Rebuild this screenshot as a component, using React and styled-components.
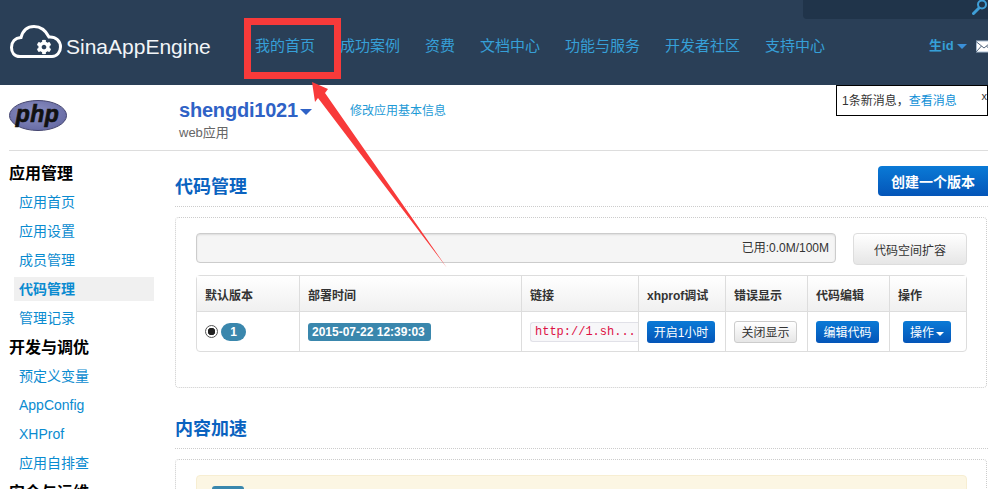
import React from "react"
import styled, { createGlobalStyle } from "styled-components"
import { FaCog } from "react-icons/fa"

const sans = `"Liberation Sans", "Noto Sans CJK SC", sans-serif`

const navItems = ["我的首页", "成功案例", "资费", "文档中心", "功能与服务", "开发者社区", "支持中心"]

const menu = [
  { title: "应用管理", links: ["应用首页", "应用设置", "成员管理", "代码管理", "管理记录"] },
  { title: "开发与调优", links: ["预定义变量", "AppConfig", "XHProf", "应用自排查"] },
  { title: "安全与运维", links: [] },
]

export default function App() {
  return (
    <Page>
      <GlobalStyle />
      <Header>
        <Logo>
          <svg width="52" height="33" viewBox="0 0 52 33">
            <path d="M10 31.500 C4 31.500 1.500 27 1.500 22.500 C1.500 17 5 13 11 12.500 C13 5 18 1.500 24 1.500 C31 1.500 36 6 39 12 C46 11.500 50.500 16 50.500 22 C50.500 27 47 31.500 42 31.500 Z" fill="none" stroke="#fff" strokeWidth="3" />
            <FaCog x="26.500" y="14.500" size="15" color="#fff" />
          </svg>
          <LogoText>SinaAppEngine</LogoText>
        </Logo>
        <Nav>
          {navItems.map((item) => <NavLink key={item}>{item}</NavLink>)}
        </Nav>
        <UserArea>
          <UserName>生id</UserName>
          <Caret $color="#3a8fd8" $size={5} />
          <svg width="13" height="13" viewBox="0 0 13 13">
            <rect x="0.500" y="1" width="16" height="11" fill="#fff" stroke="#a9bdd2" />
            <path d="M0 1.500 L8 8 L16 1.500 M0 12 L5.500 6 M16 12 L10.500 6" fill="none" stroke="#51657c" />
          </svg>
        </UserArea>
        <SearchBox>
          <svg width="16" height="15" viewBox="0 0 16 15">
            <circle cx="10" cy="4.500" r="4" fill="none" stroke="#3f9fd8" strokeWidth="2" />
            <path d="M7 8 L1.500 13.500" stroke="#3f9fd8" strokeWidth="3" strokeLinecap="round" />
          </svg>
        </SearchBox>
      </Header>

      <AppBar>
        <PhpSlot>
          <svg width="58" height="31" viewBox="0 0 58 31">
            <defs>
              <radialGradient id="phpFill" cx="45%" cy="40%" r="65%">
                <stop offset="0%" stopColor="#8e92c4" />
                <stop offset="100%" stopColor="#6468a2" />
              </radialGradient>
            </defs>
            <ellipse cx="29" cy="15.500" rx="28.500" ry="15" fill="url(#phpFill)" stroke="#43446e" />
            <text x="28.500" y="22" textAnchor="middle" fontFamily="Liberation Sans, sans-serif" fontSize="23" fontWeight="700" fontStyle="italic" letterSpacing="0.500" fill="#111" stroke="#111" strokeWidth="0.700">php</text>
          </svg>
        </PhpSlot>
        <AppInfo>
          <AppName>shengdi1021<Caret $color="#2f62c6" $size={6} /></AppName>
          <AppType>web应用</AppType>
        </AppInfo>
        <EditLink>修改应用基本信息</EditLink>
        <Notice>
          <span>1条新消息，<NoticeLink>查看消息</NoticeLink></span>
          <NoticeClose>x</NoticeClose>
        </Notice>
      </AppBar>

      <Body>
        <Sidebar>
          {menu.map((group) => (
            <Group key={group.title}>
              <GroupTitle>{group.title}</GroupTitle>
              {group.links.map((link) => (
                <SideLink key={link} $active={link === "代码管理"}>{link}</SideLink>
              ))}
            </Group>
          ))}
        </Sidebar>

        <Main>
          <SectionHead>
            <SectionTitle>代码管理</SectionTitle>
            <CreateButton>创建一个版本</CreateButton>
          </SectionHead>
          <Panel>
            <UsageRow>
              <Usage>已用:0.0M/100M</Usage>
              <ExpandButton>代码空间扩容</ExpandButton>
            </UsageRow>
            <VersionTable>
              <colgroup>
                <col width="102" />
                <col width="222" />
                <col width="117" />
                <col width="87" />
                <col width="82" />
                <col width="82" />
                <col width="77" />
              </colgroup>
              <thead>
                <tr>
                  <th>默认版本</th>
                  <th>部署时间</th>
                  <th>链接</th>
                  <th>xhprof调试</th>
                  <th>错误显示</th>
                  <th>代码编辑</th>
                  <th>操作</th>
                </tr>
              </thead>
              <tbody>
                <tr>
                  <td>
                    <VersionCell>
                      <Radio />
                      <VersionBadge>1</VersionBadge>
                    </VersionCell>
                  </td>
                  <td><DateLabel>2015-07-22 12:39:03</DateLabel></td>
                  <LinkCell><CodeLink>http://1.sh...</CodeLink></LinkCell>
                  <ActionCell><SmallButton>开启1小时</SmallButton></ActionCell>
                  <ActionCell><SmallButton $plain>关闭显示</SmallButton></ActionCell>
                  <ActionCell><SmallButton>编辑代码</SmallButton></ActionCell>
                  <ActionCell><SmallButton>操作<Caret $color="#fff" $size={4} /></SmallButton></ActionCell>
                </tr>
              </tbody>
            </VersionTable>
          </Panel>

          <SecondHead>
            <SectionTitle>内容加速</SectionTitle>
          </SecondHead>
          <Panel>
            <Alert><AlertBadge /></Alert>
          </Panel>
        </Main>
      </Body>

      <Annotation width="988" height="489" viewBox="0 0 988 489">
        <rect x="247.500" y="21.500" width="90" height="54" fill="none" stroke="#f83a3a" strokeWidth="7" />
        <polygon points="312,82 328,89 325,93 447,268 318,98 315,102" fill="#f83a3a" />
      </Annotation>
    </Page>
  )
}

const GlobalStyle = createGlobalStyle`
  html, body {
    margin: 0;
    background: #fff;
    overflow: hidden;
  }
  * {
    box-sizing: border-box;
  }
`

const Page = styled.div`
  position: relative;
  width: 988px;
  height: 489px;
  overflow: hidden;
  font-family: ${sans};
  font-size: 14px;
  color: #333;
`

const Header = styled.div`
  position: relative;
  height: 85px;
  background: #2a3f57;
  display: flex;
  align-items: flex-start;
  padding: 0 0 0 10px;
  overflow: hidden;
`

const Logo = styled.div`
  flex: none;
  display: flex;
  align-items: flex-start;
  gap: 4px;
  width: 245px;
  margin-top: 25px;
`

const LogoText = styled.span`
  margin-top: 10px;
  font-size: 21px;
  line-height: 24px;
  color: #f2f5f8;
`

const Nav = styled.div`
  flex: none;
  display: flex;
  gap: 25px;
  margin-top: 36px;
`

const NavLink = styled.a`
  font-size: 15px;
  line-height: 20px;
  white-space: nowrap;
  color: #36a0d8;
`

const UserArea = styled.div`
  flex: none;
  display: flex;
  align-items: center;
  margin-left: 104px;
  margin-top: 36px;
  gap: 1px;

  svg {
    margin-left: 8px;
    flex: none;
  }
`

const UserName = styled.span`
  font-size: 13px;
  font-weight: 700;
  line-height: 20px;
  white-space: nowrap;
  color: #36a0d8;
`

const Caret = styled.i`
  display: inline-block;
  width: 0;
  height: 0;
  margin-left: 2px;
  vertical-align: middle;
  border-left: ${(p) => p.$size}px solid transparent;
  border-right: ${(p) => p.$size}px solid transparent;
  border-top: ${(p) => p.$size}px solid ${(p) => p.$color};
`

const SearchBox = styled.div`
  position: absolute;
  top: 0;
  right: 0;
  width: 185px;
  height: 19px;
  background: #20344a;
  border-bottom-left-radius: 4px;
  display: flex;
  justify-content: flex-end;
`

const AppBar = styled.div`
  position: relative;
  height: 66px;
  margin-left: 9px;
  border-bottom: 1px solid #ddd;
  display: flex;
  align-items: flex-start;
`

const PhpSlot = styled.div`
  width: 170px;
  padding-top: 15px;
`

const AppInfo = styled.div`
  width: 171px;
  padding-top: 13px;
`

const AppName = styled.div`
  font-size: 20px;
  line-height: 24px;
  font-weight: 700;
  letter-spacing: -0.2px;
  color: #2f62c6;
`

const AppType = styled.div`
  margin-top: 1px;
  font-size: 13px;
  line-height: 19px;
  color: #666;
`

const EditLink = styled.a`
  margin-top: 17px;
  font-size: 12px;
  line-height: 18px;
  color: #1d9ad6;
`

const Notice = styled.div`
  position: absolute;
  top: 0;
  right: 0;
  width: 152px;
  height: 31px;
  padding: 0 5px;
  background: #fff;
  border: 1px solid #000;
  display: flex;
  justify-content: space-between;
  font-size: 12px;
  line-height: 31px;
  color: #333;
`

const NoticeLink = styled.a`
  color: #0e8fd6;
`

const NoticeClose = styled.span`
  margin-top: -5px;
  margin-right: -5px;
  font-size: 11px;
`

const Body = styled.div`
  display: flex;
`

const Sidebar = styled.div`
  width: 175px;
  flex: none;
  padding: 8px 21px 0 9px;
`

const Group = styled.div`
  margin-bottom: -2px;
`

const GroupTitle = styled.div`
  height: 29px;
  margin-bottom: 2px;
  font-size: 16px;
  font-weight: 700;
  line-height: 29px;
  color: #000;
`

const SideLink = styled.a`
  display: block;
  height: 24px;
  margin: 0 0 5px 5px;
  padding-left: 5px;
  font-size: 14px;
  line-height: 24px;
  color: #0a8bd0;
  background: ${(p) => (p.$active ? "#f0f0f0" : "transparent")};
  font-weight: ${(p) => (p.$active ? 700 : 400)};
`

const Main = styled.div`
  flex: 1;
  min-width: 0;
`

const SectionHead = styled.div`
  height: 56px;
  padding-top: 15px;
  border-bottom: 1px dotted #ccc;
  display: flex;
  justify-content: space-between;
  align-items: flex-start;
`

const SecondHead = styled(SectionHead)`
  height: 61px;
  padding-top: 20px;
`

const SectionTitle = styled.h2`
  margin: 6px 0 0;
  font-size: 18px;
  line-height: 30px;
  font-weight: 700;
  color: #0a63c0;
`

const CreateButton = styled.button`
  width: 110px;
  height: 30px;
  padding: 0;
  border: 0;
  border-radius: 4px 0 0 4px;
  background: linear-gradient(#0a7ad6, #0455b8);
  color: #fff;
  font-family: ${sans};
  font-size: 14px;
  font-weight: 700;
`

const Panel = styled.div`
  margin: 10px 1px 0 0;
  height: 171px;
  padding: 15px 19px 0 20px;
  border: 1px dotted #ccc;
  border-radius: 4px;
`

const UsageRow = styled.div`
  display: flex;
  justify-content: space-between;
  align-items: flex-start;
  margin-bottom: 10px;
`

const Usage = styled.div`
  width: 640px;
  height: 30px;
  padding-right: 6px;
  background: #f5f5f5;
  border: 1px solid #ccc;
  border-radius: 4px;
  box-shadow: inset 0 1px 2px rgba(0, 0, 0, 0.1);
  text-align: right;
  font-size: 12px;
  line-height: 28px;
  color: #333;
`

const ExpandButton = styled.button`
  width: 114px;
  height: 32px;
  padding: 0;
  border: 1px solid #ddd;
  border-radius: 4px;
  background: linear-gradient(#fff, #e6e6e6);
  color: #333;
  font-family: ${sans};
  font-size: 12px;
`

const VersionTable = styled.table`
  width: 771px;
  table-layout: fixed;
  border-collapse: separate;
  border-spacing: 0;
  border: 1px solid #ddd;
  border-radius: 4px;

  th {
    height: 36px;
    padding: 1px 8px 0;
    text-align: left;
    font-size: 12px;
    font-weight: 700;
    white-space: nowrap;
    color: #333;
    background: linear-gradient(#fff, #f0f0f0);
    border-bottom: 1px solid #ddd;
    border-left: 1px solid #ddd;
  }

  td {
    height: 39px;
    padding: 0 8px;
    border-left: 1px solid #ddd;
    vertical-align: middle;
  }

  th:first-child,
  td:first-child {
    border-left: 0;
  }
`

const VersionCell = styled.div`
  display: flex;
  align-items: center;
  gap: 3px;
`

const Radio = styled.span`
  width: 13px;
  height: 13px;
  border: 1px solid #555;
  border-radius: 50%;
  background: radial-gradient(circle, #222 0 3.500px, #fff 4px);
`

const VersionBadge = styled.span`
  width: 25px;
  height: 18px;
  border-radius: 9px;
  background: #3a87ad;
  color: #fff;
  text-align: center;
  font-size: 12px;
  font-weight: 700;
  line-height: 18px;
`

const DateLabel = styled.span`
  display: block;
  width: 123px;
  height: 18px;
  padding: 0 4px;
  border-radius: 3px;
  background: #3a87ad;
  color: #fff;
  font-size: 12px;
  font-weight: 700;
  line-height: 18px;
  white-space: nowrap;
`

const LinkCell = styled.td`
  && {
    padding-right: 0;
  }
`

const CodeLink = styled.code`
  display: block;
  height: 20px;
  padding: 0 4px;
  overflow: hidden;
  white-space: nowrap;
  background: #f7f7f9;
  border: 1px solid #e1e1e8;
  border-right: 0;
  border-radius: 3px 0 0 3px;
  color: #d14;
  font-family: "Liberation Mono", monospace;
  font-size: 12px;
  line-height: 18px;
`

const ActionCell = styled.td`
  && {
    padding: 0 2px 0 0;
    text-align: center;
  }
`

const SmallButton = styled.button`
  width: auto;
  height: 22px;
  padding: 0 ${(p) => (p.$plain ? 6 : 7)}px;
  border: ${(p) => (p.$plain ? "1px solid #ccc" : "0")};
  border-radius: 3px;
  background: ${(p) => (p.$plain ? "linear-gradient(#fff, #e6e6e6)" : "linear-gradient(#0a7ad6, #0455b8)")};
  color: ${(p) => (p.$plain ? "#333" : "#fff")};
  font-family: ${sans};
  font-size: 12px;
  white-space: nowrap;
`

const Alert = styled.div`
  height: 60px;
  padding: 10px 15px;
  background: #fcf6e3;
  border: 1px solid #f7eed2;
  border-radius: 4px;
`

const AlertBadge = styled.div`
  width: 32px;
  height: 18px;
  border-radius: 3px;
  background: #3a87ad;
`

const Annotation = styled.svg`
  position: absolute;
  top: 0;
  left: 0;
  pointer-events: none;
`
